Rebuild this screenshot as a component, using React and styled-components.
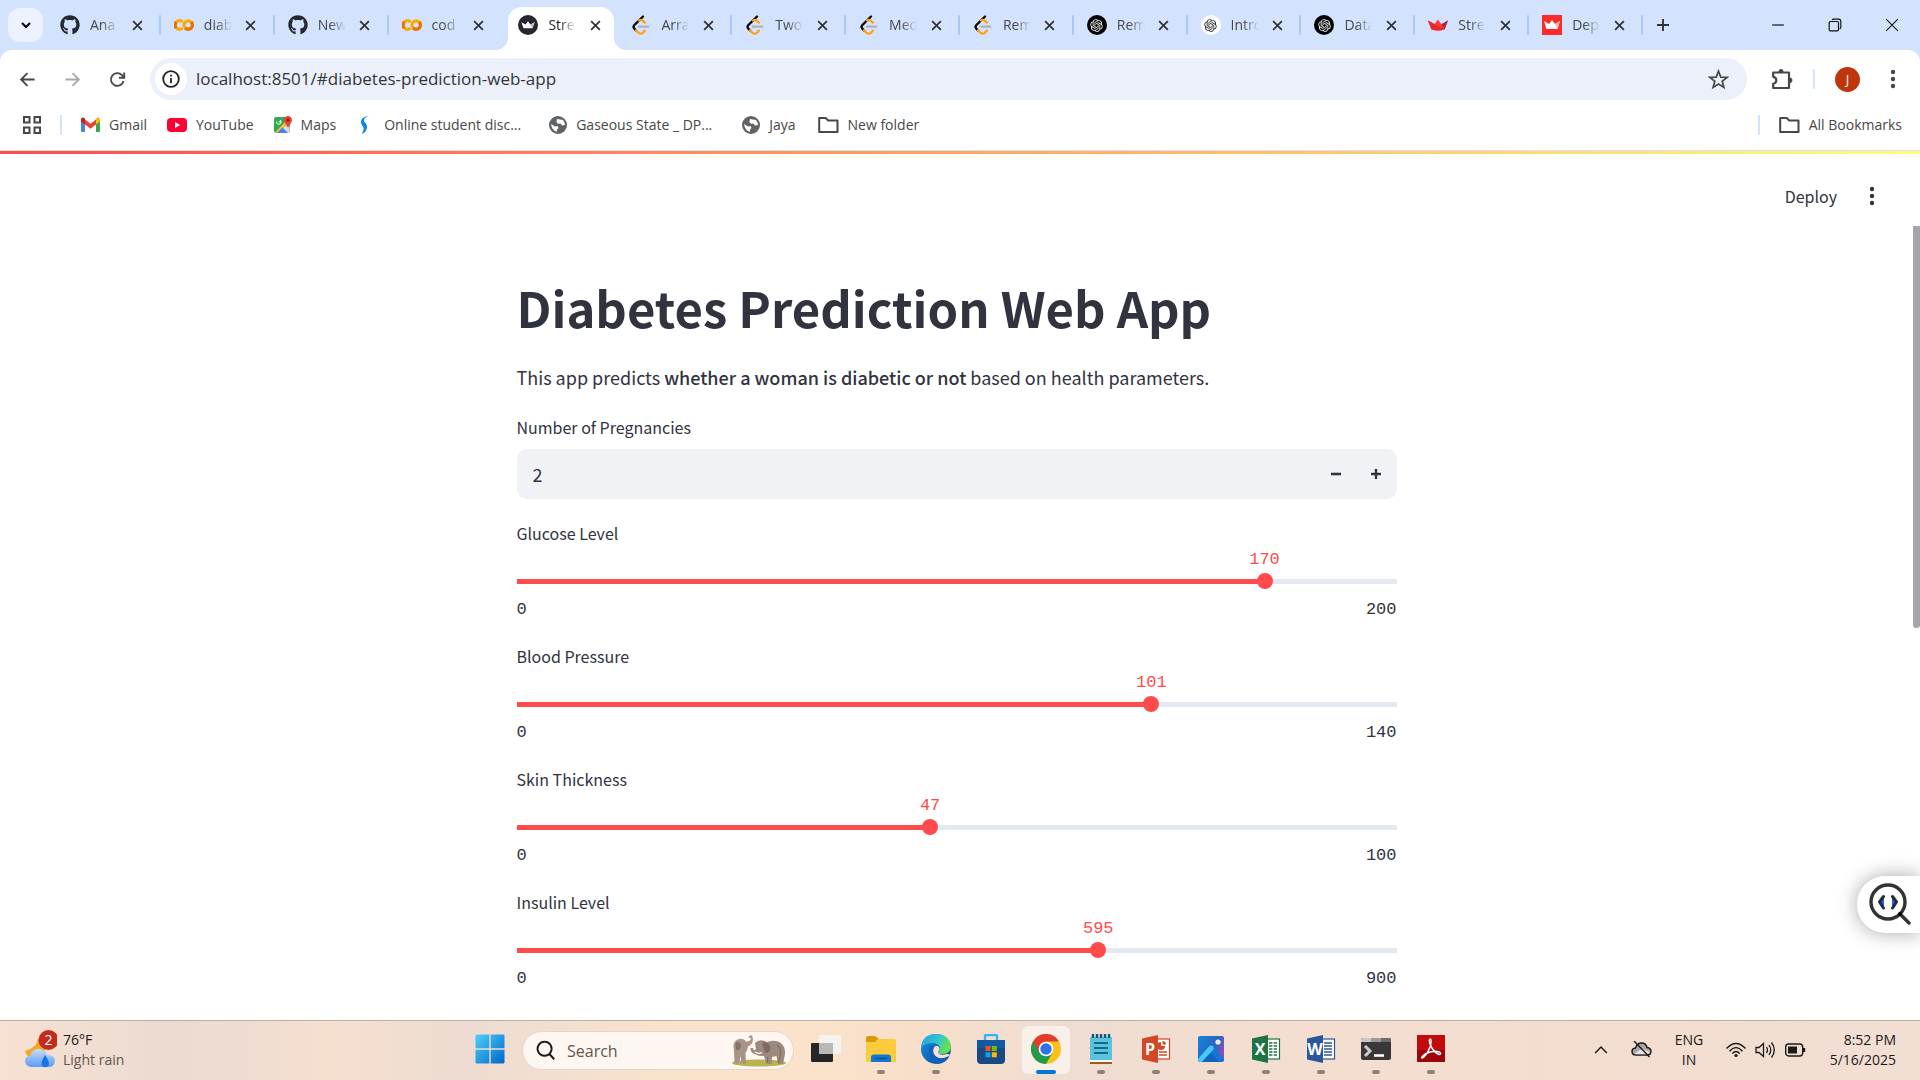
import React, { useState } from "react";
import styled, { createGlobalStyle } from "styled-components";
import { FaGithub } from "react-icons/fa";
import { RiOpenaiFill } from "react-icons/ri";

const ui = `"Open Sans", "Noto Sans", sans-serif`;
const sans = `"Noto Sans CJK SC", "Open Sans", sans-serif`;
const mono = `"Liberation Mono", monospace`;

const Global = createGlobalStyle`
  *, *::before, *::after { box-sizing: border-box; }
  body { margin: 0; background: #fff; font-family: ${ui}; }
  button, input { font: inherit; color: inherit; margin: 0; padding: 0; border: 0; background: none; outline: none; }
  button { cursor: pointer; }
  svg { display: block; flex: none; }
  a { color: inherit; text-decoration: none; }
`;

const Screen = styled.div`
  display: flex;
  flex-direction: column;
  height: 100vh;
  overflow: hidden;
`;

/* ---------- browser chrome ---------- */

const TabStrip = styled.div`
  display: flex;
  align-items: flex-end;
  height: 50px;
  padding-left: 8px;
  background: #d3e3fd;
`;

const TabSearch = styled.button`
  display: grid;
  place-items: center;
  width: 35px;
  height: 34px;
  margin: 0 4px 8px 0;
  border-radius: 12px;
  background: #ecf2fe;
`;

const Tabs = styled.div`
  display: flex;
  flex: 0 1 1596px;
  min-width: 0;
`;

const TabItem = styled.div`
  position: relative;
  display: flex;
  align-items: center;
  flex: ${(p) => (p.$active ? "0 0 106px" : "1 1 0")};
  min-width: 0;
  height: 43px;
  padding: 0 0 7px ${(p) => (p.$active ? "10px" : "13px")};
  margin: ${(p) => (p.$active ? "0 4px 0 6px" : "0")};
  background: ${(p) => (p.$active ? "#fff" : "transparent")};
  border-radius: 14px 14px 0 0;

  &::before, &::after {
    content: "";
    display: ${(p) => (p.$active ? "block" : "none")};
    position: absolute;
    bottom: 0;
    width: 12px;
    height: 12px;
  }
  &::before { left: -12px; background: radial-gradient(circle at 0 0, transparent 12px, #fff 12px); }
  &::after { right: -12px; background: radial-gradient(circle at 100% 0, transparent 12px, #fff 12px); }
`;

const TabTitle = styled.span`
  flex: none;
  width: 32px;
  margin: 0 7px 0 10px;
  white-space: nowrap;
  font-size: 14px;
  line-height: 20px;
  color: ${(p) => (p.$active ? "#1f1f1f" : "#474747")};
  mask-image: linear-gradient(90deg, #000 12px, transparent 28px);
`;

const TabClose = styled.button`
  display: grid;
  place-items: center;
  flex: none;
  width: 16px;
  height: 16px;
  color: #303134;
`;

const TabDivider = styled.span`
  flex: none;
  margin-left: auto;
  width: 2px;
  height: 20px;
  border-radius: 1px;
  background: ${(p) => (p.$hidden ? "transparent" : "#a8c7fa")};
`;

const NewTab = styled.button`
  display: grid;
  place-items: center;
  width: 34px;
  height: 34px;
  margin: 0 0 8px 3px;
  color: #303134;
`;

const WindowControls = styled.div`
  display: flex;
  align-self: stretch;
  margin-left: auto;
  button { display: grid; place-items: center; width: 57px; color: #111; }
`;

const Frame = styled.div`
  background: #d3e3fd;
`;

const Toolbar = styled.div`
  display: flex;
  align-items: center;
  height: 58px;
  padding: 0 7px 0 5px;
  background: #fff;
  border-radius: 12px 12px 0 0;
  color: #474747;
`;

const IconButton = styled.button`
  display: grid;
  place-items: center;
  width: 45px;
  height: 40px;
  color: ${(p) => (p.$dim ? "#aaa" : "#474747")};
`;

const AddressBar = styled.div`
  display: flex;
  align-items: center;
  flex: 1;
  height: 42px;
  margin: 0 12px 0 10px;
  padding: 0 18px 0 5px;
  border-radius: 21px;
  background: #ecf0fa;
`;

const SiteInfo = styled.button`
  display: grid;
  place-items: center;
  width: 32px;
  height: 32px;
  border-radius: 50%;
  background: #fff;
`;

const Url = styled.input`
  flex: 1;
  min-width: 0;
  margin-left: 9px;
  font-size: 17px;
  line-height: 24px;
  color: #333538;
`;

const Rule = styled.span`
  width: 2px;
  height: 20px;
  margin-left: ${(p) => p.$space || 0}px;
  border-radius: 1px;
  background: #d3e3fd;
`;

const Avatar = styled.button`
  width: 25px;
  height: 25px;
  margin: 0 10px 0 20px;
  border-radius: 50%;
  background: #bf360c;
  color: #fff;
  font-size: 13px;
  line-height: 25px;
`;

const Kebab = styled.button`
  display: grid;
  place-items: center;
  width: 45px;
  height: 40px;
  margin-right: ${(p) => (p.$app ? "0" : "-2px")};
`;

const Bookmarks = styled.nav`
  display: flex;
  align-items: center;
  height: 43px;
  padding: 0 18px 9px 23px;
  background: #fff;
  font-size: 14px;
  line-height: 20px;
  color: #474747;
  border-bottom: 1px solid #dcdfe3;
`;

const Bookmark = styled.a`
  display: flex;
  align-items: center;
  gap: 9px;
  margin-left: ${(p) => p.$space}px;
  white-space: nowrap;
`;

const BookmarkLabel = styled.span`
  min-width: ${(p) => p.$width || 0}px;
`;

const Push = styled.div`
  display: flex;
  align-items: center;
  margin-left: auto;
`;

/* ---------- Streamlit app ---------- */

const AppView = styled.div`
  position: relative;
  flex: 1;
  min-height: 0;
  display: flex;
  flex-direction: column;
  background: #fff;
  color: #31333f;
  font-family: ${sans};
`;

const AppHeader = styled.header`
  display: flex;
  align-items: center;
  justify-content: flex-end;
  flex: none;
  height: 75px;
  padding: 11px 26px 0 0;
  border-top: 3px solid;
  border-image: linear-gradient(90deg, #ff4b4b, #fffd80) 1;
`;

const Deploy = styled.button`
  margin-right: 12px;
  font-size: 16px;
  line-height: 24px;
`;

const Scroller = styled.div`
  display: flex;
  flex: 1;
  min-height: 0;
  overflow: hidden;
`;

const ScrollThumb = styled.div`
  width: 7px;
  height: 402px;
  background: #a5a5ab;
  border-radius: 0 0 3px 3px;
`;

const Main = styled.main`
  flex: 1;
  padding: 47px 20px 0;
`;

const Column = styled.div`
  display: flex;
  flex-direction: column;
  gap: 20px;
  max-width: 880px;
  margin: 0 auto;
`;

const Title = styled.h1`
  margin: 0;
  font-size: 49px;
  line-height: 68px;
  font-weight: 700;
`;

const Intro = styled.p`
  margin: 0;
  font-size: 18px;
  line-height: 32px;
  strong { font-weight: 500; }
`;

const Field = styled.div`
  display: flex;
  flex-direction: column;
`;

const Label = styled.label`
  font-size: 16px;
  line-height: 28px;
`;

const NumberBox = styled.div`
  display: flex;
  height: 50px;
  margin-top: 8px;
  padding-right: 1px;
  border-radius: 10px;
  background: #f0f2f6;
  overflow: hidden;
  input { flex: 1; min-width: 0; padding-left: 16px; font-size: 18px; line-height: 28px; }
  button { display: grid; place-items: center; width: 40px; }
`;

const NumberEnd = styled.div`
  display: flex;
`;

const ValueRow = styled.div`
  position: relative;
  height: 26px;
  font-family: ${mono};
  font-size: 17px;
  line-height: 26px;
  color: #ff4b4b;
  output { position: absolute; top: 0; transform: translateX(-50%); }
`;

const Track = styled.div`
  display: flex;
  height: 16px;
  background: linear-gradient(#e4e8f0, #e4e8f0) center / 100% 5px no-repeat;
`;

const Range = styled.input`
  appearance: none;
  flex: 1;
  height: 16px;
  margin: 0 -8px;
  cursor: pointer;
  &::-webkit-slider-thumb {
    appearance: none;
    width: 16px;
    height: 16px;
    border-radius: 50%;
    background: #ff4b4b;
  }
`;

const Limits = styled.div`
  display: flex;
  justify-content: space-between;
  margin-top: 9px;
  font-family: ${mono};
  font-size: 17px;
  line-height: 24px;
`;

const Inspector = styled.button`
  position: absolute;
  right: 0;
  bottom: 87px;
  display: flex;
  align-items: center;
  width: 63px;
  height: 57px;
  padding-left: 10px;
  border-radius: 28px 0 0 28px;
  background: #fff;
  box-shadow: 0 0 20px rgba(0, 0, 0, 0.35);
`;

/* ---------- Windows taskbar ---------- */

const Taskbar = styled.footer`
  display: grid;
  grid-template-columns: 1fr auto 1fr;
  flex: none;
  height: 60px;
  border-top: 1px solid #bcaea4;
  background: linear-gradient(90deg, #f7e1d2 0%, #eddbd2 8%, #eedbd2 12%, #f6dfcf 17%, #eedcd2 24%, #f2dfd0 29%, #fae3cb 35%, #fbe2ca 42%, #f8dfca 48%, #efdcd2 56%, #f4ded0 68%, #f3ddcf 80%, #f2ded3 100%);
  color: #1b1a19;
`;

const Weather = styled.button`
  display: flex;
  align-items: center;
  justify-self: start;
  gap: 6px;
  padding: 0 0 2px 22px;
  text-align: left;
  font-size: 14px;
  line-height: 20px;
  div { color: #5e5650; }
  b { display: block; font-weight: 400; color: #1b1a19; }
`;

const Dock = styled.div`
  display: flex;
  align-items: center;
`;

const DockItem = styled.button`
  display: flex;
  flex-direction: column;
  align-items: center;
  width: 55px;
  height: 59px;
  padding-top: 5px;
`;

const DockPlate = styled.span`
  display: flex;
  flex-direction: column;
  align-items: center;
  width: 48px;
  height: 48px;
  padding-top: 8px;
  border-radius: 6px;
  background: ${(p) => (p.$active ? "#faf0ea" : "transparent")};
  box-shadow: ${(p) => (p.$active ? "0 0 0 1px #ecddd3" : "none")};
`;

const Indicator = styled.span`
  flex: none;
  width: ${(p) => (p.$active ? 20 : 8)}px;
  height: 4px;
  margin-top: 6px;
  border-radius: 2px;
  background: ${(p) => (p.$active ? "#0078d4" : p.$open ? "#8d817b" : "transparent")};
`;

const SearchBox = styled.label`
  display: flex;
  align-items: center;
  width: 272px;
  height: 39px;
  margin: 0 4px 0 5px;
  padding: 0 6px 0 12px;
  border-radius: 20px;
  border: 1px solid #e6d5c8;
  background: #fef6f0;
  input { flex: 1; min-width: 0; margin-left: 11px; font-size: 16px; line-height: 22px; }
  input::placeholder { color: #5f5751; opacity: 1; }
`;

const Tray = styled.div`
  display: flex;
  align-items: center;
  justify-self: end;
  padding: 0 24px 2px 0;
  font-size: 14px;
  line-height: 20px;
`;

const Language = styled.button`
  width: 40px;
  margin: 0 17px;
  text-align: center;
`;

const Status = styled.button`
  display: flex;
  align-items: center;
  gap: 9px;
  margin-right: 20px;
`;

const Clock = styled.button`
  min-width: 70px;
  text-align: right;
`;

const TrayButton = styled.button`
  margin-right: ${(p) => p.$gap || 0}px;
`;

/* ---------- drawings ---------- */

const Stroke = ({ d, s = 20, w = 2, box = 24 }) => (
  <svg width={s} height={s} viewBox={`0 0 ${box} ${box}`} fill="none" stroke="currentColor" strokeWidth={w}>
    <path d={d} />
  </svg>
);

const Dots = ({ color = "#474747" }) => (
  <svg width="6" height="20" viewBox="0 0 6 20" fill={color}>
    <circle cx="3" cy="3" r="2.2" /><circle cx="3" cy="10" r="2.2" /><circle cx="3" cy="17" r="2.2" />
  </svg>
);

const Colab = () => (
  <svg width="20" height="20" viewBox="0 0 20 20" fill="none" strokeWidth="3.2">
    <path d="M8.6 7A4.3 4.3 0 1 0 8.6 13" stroke="#f9ab00" />
    <path d="M2.3 13A4.3 4.3 0 0 1 2.3 7" stroke="#e8710a" />
    <circle cx="14.2" cy="10" r="4.2" stroke="#f9ab00" />
    <path d="M17.2 7A4.2 4.2 0 0 1 11.2 13" stroke="#e8710a" />
  </svg>
);

const Crown = ({ color, dark, light, size = 20 }) => (
  <svg width={size} height={size} viewBox="0 0 20 20">
    <path d="M0 5.5 L6.5 9.2 L10 4.5 L13.5 9.2 L20 5.5 L16.5 14.5 Q10 16.5 3.5 14.5Z" fill={color} />
    <path d="M13.5 9.2 L20 5.5 L16.5 14.5Z" fill={dark} />
    <path d="M0 5.5 L16.5 14.5 Q10 16.5 3.5 14.5Z" fill={light} />
  </svg>
);

const StreamlitDark = () => (
  <svg width="20" height="20" viewBox="0 0 21 21">
    <circle cx="10.5" cy="10.5" r="10.5" fill="#262730" />
    <path d="M3.5 7.5 L8 10 L10.5 6.5 L13 10 L17.5 7.5 L15.2 14 H5.8Z" fill="#fff" />
    <path d="M13 10 L17.5 7.5 L15.2 14Z" fill="#bbb" />
  </svg>
);

const StreamlitTile = () => (
  <svg width="20" height="20" viewBox="0 0 20 20">
    <rect width="20" height="20" fill="#ff2b2b" />
    <path d="M2 6 L7 9 L10 5 L13 9 L18 6 L15.5 14 H4.5Z" fill="#fff" />
    <path d="M13 9 L18 6 L15.5 14Z" fill="#ffb8b8" />
  </svg>
);

const LeetCode = () => (
  <svg width="20" height="20" viewBox="0 0 20 20" fill="none" strokeLinecap="round" strokeWidth="2.3">
    <path d="M12 1.5 L3.2 10.2 Q1.8 11.8 3.2 13.4 L5 15.4" stroke="#070706" />
    <path d="M8 5.6 Q9.8 4 11.8 5.7 L13.8 7.6 M5 15.4 L7.6 17.9 Q9.8 19.4 11.8 17.8 L13.8 15.7" stroke="#ffa116" />
    <path d="M8 11.7 H17.2" stroke="#b3b3b3" />
  </svg>
);

const Badge = styled.span`
  display: grid;
  place-items: center;
  flex: none;
  width: 20px;
  height: 20px;
  border-radius: 50%;
  background: ${(p) => (p.$dark ? "#000" : "#fff")};
  color: ${(p) => (p.$dark ? "#fff" : "#222")};
`;

const OpenAI = ({ dark }) => <Badge $dark={dark}><RiOpenaiFill size={15} /></Badge>;

const Globe = () => (
  <svg width="18" height="18" viewBox="0 0 18 18">
    <circle cx="9" cy="9" r="9" fill="#5f6368" />
    <path d="M2 8 L6 10.5 L8.5 10 L9.5 12 L8 13.5 L8 15.8 Q3 15 2 8Z M8 3 L14 4 Q16 6.5 15.9 9 L13 9.5 L11.5 7.5 L9 7.8 L7.4 6Z" fill="#fff" />
  </svg>
);

const Folder = () => (
  <svg width="21" height="18" viewBox="0 0 21 18" fill="none" stroke="#474747" strokeWidth="2" strokeLinejoin="round">
    <path d="M1.2 2 H7.7 L10.2 4.5 H19.5 V16 H1.2Z" />
  </svg>
);

const Gmail = () => (
  <svg width="19" height="15" viewBox="0 0 19 15">
    <path d="M0 2 V13.5 Q0 15 1.5 15 H4 V5Z" fill="#4285f4" />
    <path d="M19 2 V13.5 Q19 15 17.5 15 H15 V5Z" fill="#34a853" />
    <path d="M4 2.5 L9.5 6.7 L15 2.5 V7.5 L9.5 11.8 L4 7.5Z" fill="#ea4335" />
    <path d="M0 2.2 Q.8-1 4 1.5 V7.5 L0 4.5Z" fill="#c5221f" />
    <path d="M19 2.2 Q18.2-1 15 1.5 V7.5 L19 4.5Z" fill="#fbbc04" />
  </svg>
);

const YouTube = () => (
  <svg width="20" height="14" viewBox="0 0 20 14">
    <rect width="20" height="14" rx="4" fill="#f03" /><path d="M8 4 L13.3 7 L8 10Z" fill="#fff" />
  </svg>
);

const Maps = () => (
  <svg width="18" height="18" viewBox="0 0 18 18">
    <rect y="1" width="16" height="16" rx="2" fill="#34a853" />
    <path d="M4 17 L15 6 L16 17Z" fill="#d7dbe0" />
    <path d="M1 16.5 L12 5 L14 7 L4 17Z" fill="#fbc02d" />
    <path d="M3 17 L8.5 11.5 L14 17Z" fill="#4285f4" />
    <path d="M2.5 5.6 A2.3 2.3 0 1 0 6 4 M4.6 5.8 H7" stroke="#fff" fill="none" />
    <path d="M14 0 A4 4 0 0 1 18 4.2 Q17.5 7 14 11.5 Q10.5 7 10 4.2 A4 4 0 0 1 14 0Z" fill="#ea4335" />
    <circle cx="14" cy="4" r="1.5" fill="#811411" />
  </svg>
);

const SMark = () => (
  <svg width="20" height="18" viewBox="0 0 20 18">
    <path d="M14 0 Q8 1.5 9 5.5 Q13 9 11.8 12.5 Q11 16.5 6.5 18 Q9.5 14 8.3 11 Q4.5 6.5 7 2.8 Q9.5.2 14 0Z" fill="#0a84e8" />
  </svg>
);

const Puzzle = () => (
  <svg width="22" height="22" viewBox="0 0 22 22" fill="none" stroke="#474747" strokeWidth="2.2" strokeLinejoin="round">
    <path d="M2.2 4.5 H18 V20 H2.2 V15.8 Q5.3 15.3 5.3 12.3 Q5.3 9.3 2.2 8.8Z" />
    <path d="M7.4 4.5 Q7.4 1 10 1 Q12.6 1 12.6 4.5Z M18 9.4 Q21.4 9.4 21.4 12.2 Q21.4 15 18 15Z" fill="#474747" stroke="none" />
  </svg>
);

const InspectIcon = () => (
  <svg width="44" height="44" viewBox="0 0 44 44" fill="none" strokeLinecap="round" strokeLinejoin="round">
    <path d="M16 14 L12 19 L16 24Z M25 14 L29 19 L25 24Z" fill="#1a66ff" />
    <circle cx="21" cy="19" r="17" stroke="#333" strokeWidth="3.4" />
    <path d="M33.5 31.5 L42 40" stroke="#333" strokeWidth="3.4" />
    <path d="M17 13.5 L13 19 L17 24.5 Z M25 13.5 L29 19 L25 24.5Z" fill="#1a66ff" />
    <path d="M16.5 13.5 L12.5 19 L16.5 25 M25.5 13.5 L29.5 19 L25.5 25" stroke="#252a33" strokeWidth="3" />
    <circle cx="33" cy="31" r="2" fill="#000" />
  </svg>
);

const WeatherIcon = () => (
  <svg width="35" height="42" viewBox="0 0 35 42">
    <defs>
      <linearGradient id="cloud" x1="0" y1="0" x2="0" y2="1"><stop stopColor="#c8dcfb" /><stop offset="1" stopColor="#5c9bf2" /></linearGradient>
    </defs>
    <path d="M16 9 Q15 19 3 22 Q6 31 15 30 Q25 27 23 17Z" fill="#f5a623" />
    <path d="M9 38 Q3 37 3 31 Q4 27 8 27 Q10 19 18 20 Q24 21 25 26 Q33 26 33 32 Q32 38 27 38Z" fill="url(#cloud)" />
    <path d="M23 26 Q28 33 26.5 36.5 Q23 40 20 36.5 Q18.5 33 23 26Z" fill="#1473e6" />
    <circle cx="26.5" cy="11" r="10" fill="#c42b1c" />
    <text x="26.5" y="16" textAnchor="middle" fontSize="14" fill="#fff" fontFamily="Open Sans, sans-serif">2</text>
  </svg>
);

const Elephants = () => (
  <svg width="56" height="32" viewBox="0 0 56 32">
    <ellipse cx="28" cy="28" rx="27" ry="3.6" fill="#b8b34c" />
    <path d="M3 15 Q1 6 8 4 Q13 3 15 6.5 Q20 7 20 2.5 L17.5 3 Q18-.5 21 .5 Q24 8 17 11.5 Q16.5 15 14.5 18 L15 28.5 H10.5 L9.5 21 L8 28.5 H3.5Z" fill="#a89387" />
    <path d="M4.5 8 Q9 5 10 11 Q9 16.5 5 15Z" fill="#86726a" />
    <path d="M24 8 Q29 3 36 7 Q48 3 53 12 Q55 17 53 24 L52 29 H47 L45.5 21 L41 22 L40.5 29 H35.5 L33 21 Q28 21.5 25 19.5 Q19 18 19.5 13 L22 13 Q22.5 17 25 14Z" fill="#9d897e" />
    <path d="M31 8 Q38.5 6 39.5 13 Q38 20 33.5 17Z" fill="#7e6a62" />
    <path d="M46 10 Q51 14 49 22 L47 28 M36.5 22 V28" stroke="#836f66" strokeWidth="1.2" fill="none" />
    <path d="M24 17 Q28 19.5 31 17.5" stroke="#fff" strokeWidth="1.2" fill="none" />
  </svg>
);

const Windows = () => (
  <svg width="30" height="30" viewBox="0 0 30 30">
    <defs><linearGradient id="win" x1="0" y1="0" x2="1" y2="1"><stop stopColor="#4ed0fd" /><stop offset="1" stopColor="#0067c8" /></linearGradient></defs>
    <path d="M1.5.5 H14.3 V14.3 H.5 V1.5Z M15.7.5 H28.5 L29.5 1.5 V14.3 H15.7Z M.5 15.7 H14.3 V29.5 H1.5 L.5 28.5Z M15.7 15.7 H29.5 V28.5 L28.5 29.5 H15.7Z" fill="url(#win)" />
  </svg>
);

const Svg30 = ({ children }) => <svg width="30" height="30" viewBox="0 0 30 30">{children}</svg>;

const TaskView = () => (
  <Svg30>
    <rect x="0" y="9" width="22" height="19" rx="1" fill="#262626" />
    <rect x="8" y="1" width="22" height="19" rx="1" fill="#f4f3f2" />
    <path d="M8 9 H22 V20 H8Z" fill="#bab7b5" />
  </Svg30>
);
const Explorer = () => (
  <Svg30>
    <path d="M0 4 Q0 2 2 2 H9 L13 5 V12 H0Z" fill="#d99a06" />
    <path d="M0 8 H9 L12 5 H28 Q30 5 30 7 V28 H0Z" fill="#fbcb3c" />
    <path d="M5 28 V23 Q5 20.5 8 20.5 H22 Q25 20.5 25 23 V28Z" fill="#0f78d4" />
    <path d="M9 24.5 H21" stroke="#0a4f92" strokeWidth="1.5" />
  </Svg30>
);
const Edge = () => (
  <Svg30>
    <defs>
      <linearGradient id="edgeTop" x1="0" y1="0" x2="1" y2=".4"><stop stopColor="#1ea1e6" /><stop offset=".6" stopColor="#33c6c9" /><stop offset="1" stopColor="#68e04f" /></linearGradient>
      <linearGradient id="edgeLow" x1="0" y1="0" x2="1" y2="1"><stop stopColor="#1b8fe0" /><stop offset="1" stopColor="#0b4a9c" /></linearGradient>
    </defs>
    <circle cx="15" cy="15" r="15" fill="url(#edgeLow)" />
    <path d="M0 14 Q1 0 15 0 Q28 0 30 12 Q30 20 21 20 Q17 20 17 18 Q19 17 19 14 Q18 9 11 9 Q4 9 0 14Z" fill="url(#edgeTop)" />
    <path d="M14 12 Q10 16 13 21 Q18 27 28 22 Q30 20 26 20 Q18 22 17 18 Q20 15 17 12Z" fill="#f7e0cf" />
    <path d="M9 12 Q5 24 16 30 Q24 30 28 23 Q19 27 13.5 21 Q10.5 16 14 12Z" fill="#1063bd" />
  </Svg30>
);
const Store = () => (
  <Svg30>
    <path d="M9 6 V2 Q9 1 10 1 H20 Q21 1 21 2 V6" stroke="#2fb7f2" strokeWidth="2.4" fill="none" />
    <path d="M1 6 H29 V26 Q29 30 25 30 H5 Q1 30 1 26Z" fill="#174a85" />
    <path d="M1 6 H29 V14 H1Z" fill="#105ca9" opacity=".8" />
    <path d="M9.5 12 H14.5 V17 H9.5Z" fill="#f25022" /><path d="M15.8 12 H20.8 V17 H15.8Z" fill="#7fba00" />
    <path d="M9.5 18.3 H14.5 V23.3 H9.5Z" fill="#00a4ef" /><path d="M15.8 18.3 H20.8 V23.3 H15.8Z" fill="#ffb900" />
  </Svg30>
);
const Chrome = () => (
  <Svg30>
    <circle cx="15" cy="15" r="15" fill="#fbc116" />
    <path d="M15 15 L2 7.5 A15 15 0 0 0 15 30 L21.5 18.7Z" fill="#229c4c" />
    <path d="M2 7.5 A15 15 0 0 1 28 7.5 H15 L8.5 18.7Z" fill="#e33b2e" />
    <circle cx="15" cy="15" r="7.3" fill="#fff" /><circle cx="15" cy="15" r="5.7" fill="#2f73ea" />
  </Svg30>
);
const Notepad = () => (
  <Svg30>
    <rect x="4" y="3" width="22" height="24" rx="1" fill="#5cc1dd" />
    <path d="M7 0 V4 M11 0 V4 M15 0 V4 M19 0 V4 M23 0 V4" stroke="#0c5a78" strokeWidth="2.4" />
    <path d="M8 9 H22 M8 14 H22 M8 19 H22" stroke="#0b6c8d" strokeWidth="1.8" />
    <path d="M4 26 H26 V28 H4Z" fill="#fff" /><path d="M4 28 H26 V30 H4Z" fill="#a4571c" />
  </Svg30>
);
const Office = ({ letter, color }) => (
  <Svg30>
    <rect x="13" y="5" width="15.5" height="20" fill="#fff" stroke={color} strokeWidth="1.2" />
    <path d="M18 9 H26 M18 12 H26 M18 15 H26 M18 18 H26 M18 21 H26" stroke={color} strokeWidth="1.6" />
    {letter === "X" && <path d="M22 7 V23" stroke="#fff" strokeWidth="1.2" />}
    {letter === "P" && <path d="M17 8 H26 V16.5 H17Z" fill="#fff" />}
    {letter === "P" && <path d="M20 8 A4 4 0 1 0 24 12 H20Z M21.5 7 V10.5 H25 A3.5 3.5 0 0 0 21.5 7Z" fill={color} />}
    <path d="M1 4.5 L17 1 V29 L1 25.5Z" fill={color} />
    <text x="9" y="21" textAnchor="middle" fontSize="16" fontWeight="700" fill="#fff" fontFamily="Open Sans, sans-serif">{letter}</text>
  </Svg30>
);
const Photos = () => (
  <Svg30>
    <defs><linearGradient id="photo" x1="0" y1="0" x2="1" y2=".6"><stop stopColor="#1186df" /><stop offset=".6" stopColor="#2a65bd" /><stop offset="1" stopColor="#8f4eb4" /></linearGradient></defs>
    <rect x="2" y="2" width="26" height="26" rx="2" fill="url(#photo)" />
    <path d="M12 13 Q15 9 18 13 L28 25 Q28 28 25 28 H18 L8 19Z" fill="#1576d4" />
    <path d="M2 25 L13 12.5 Q15 10.5 17 12.5 Q18.5 14 17 16 L6 28 H4 Q2 28 2 25Z" fill="#46c8fa" />
    <path d="M6 28 L13.5 20 Q15 19 16.5 20 L23 28Z" fill="#1064c0" />
    <circle cx="22" cy="8" r="2.6" fill="#e8eefc" />
  </Svg30>
);
const Terminal = () => (
  <Svg30>
    <rect y="4" width="30" height="22" rx="2" fill="#383838" />
    <path d="M0 8 V6 Q0 4 2 4 H10 V8Z" fill="#c9c9c9" /><path d="M10 4 H20 V8 H10Z" fill="#9b9b9b" /><path d="M20 4 H28 Q30 4 30 6 V8 H20Z" fill="#6d6d6d" />
    <path d="M4 12 L9 17 L4 22" stroke="#ccc" strokeWidth="3" fill="none" /><path d="M13 21.5 H23" stroke="#fff" strokeWidth="2.6" />
  </Svg30>
);
const Acrobat = () => (
  <Svg30>
    <rect x="1" y="1" width="28" height="27" fill="#c30b0e" /><path d="M1 16 H29 V28 H1Z" fill="#7c0407" opacity=".55" />
    <path d="M6 24 Q10 23 14 13 Q16 6 14.5 5 Q12.5 5 14 10 Q17 18 23 20.5 Q26 20 23.5 18 Q17 16 9 20 Q5 23 6 24Z" fill="none" stroke="#fff" strokeWidth="1.5" />
  </Svg30>
);

const CloudOff = () => (
  <svg width="21" height="17" viewBox="0 0 21 17" fill="none" stroke="#1b1a19" strokeWidth="1.4">
    <path d="M5 14 Q1 14 1 10.5 Q1 7.5 4.5 7 Q6 2 10.5 2 Q15 2 16 6.5 Q20 7 20 10.5 Q20 14 16 14Z" fill="#aaa6a4" />
    <path d="M3 13 L11 7.5 L19 11 Q18 13.3 16 13.3 H5Z" fill="#e6e3e2" stroke="none" /><path d="M3 0 L18.5 16" />
  </svg>
);
const Wifi = () => (
  <svg width="20" height="16" viewBox="0 0 20 16" fill="none" stroke="#1b1a19" strokeWidth="1.4">
    <path d="M.5 6.5 Q10-3.5 19.5 6.5 M3.5 9.2 Q10 2 16.5 9.2 M6.3 11.6 Q10 7.5 13.7 11.6" /><circle cx="10" cy="13.5" r="1.6" fill="#1b1a19" stroke="none" />
  </svg>
);
const Speaker = () => (
  <svg width="21" height="18" viewBox="0 0 21 18" fill="none" stroke="#1b1a19" strokeWidth="1.3">
    <path d="M1 6.5 H4 L8.5 2.5 V15.5 L4 11.5 H1Z M11.5 6 Q13.5 9 11.5 12 M14 4 Q17.5 9 14 14 M16.5 1.5 Q22 9 16.5 16.5" />
  </svg>
);
const Battery = () => (
  <svg width="21" height="14" viewBox="0 0 21 14" fill="none" stroke="#1b1a19" strokeWidth="1.4">
    <rect x=".7" y="1" width="17" height="12" rx="3" /><rect x="3" y="3.5" width="9" height="7" fill="#1b1a19" stroke="none" /><path d="M19 5 V9" strokeWidth="2.4" />
  </svg>
);

/* ---------- data ---------- */

const tabs = [
  ["Ana", <FaGithub size={20} color="#24292f" />],
  ["diab", <Colab />],
  ["New", <FaGithub size={20} color="#24292f" />],
  ["cod", <Colab />],
  ["Stre", <StreamlitDark />],
  ["Arra", <LeetCode />],
  ["Two", <LeetCode />],
  ["Med", <LeetCode />],
  ["Rem", <LeetCode />],
  ["Rem", <OpenAI dark />],
  ["Intro", <OpenAI />],
  ["Data", <OpenAI dark />],
  ["Stre", <Crown color="#ff3a3a" dark="#9b3346" light="#e8262c" />],
  ["Dep", <StreamlitTile />],
];

const bookmarks = [
  ["Gmail", <Gmail />, 19],
  ["YouTube", <YouTube />, 20],
  ["Maps", <Maps />, 20],
  ["Online student disc...", <SMark />, 19, 139],
  ["Gaseous State _ DP...", <Globe />, 26, 138],
  ["Jaya", <Globe />, 28],
  ["New folder", <Folder />, 22],
];

const dock = [
  ["Task view", <TaskView />, false],
  ["File Explorer", <Explorer />, true],
  ["Edge", <Edge />, true],
  ["Store", <Store />, false],
  ["Chrome", <Chrome />, true, true],
  ["Notepad", <Notepad />, true],
  ["PowerPoint", <Office letter="P" color="#d24726" />, true],
  ["Photos", <Photos />, true],
  ["Excel", <Office letter="X" color="#1f7244" />, true],
  ["Word", <Office letter="W" color="#2b579a" />, true],
  ["Terminal", <Terminal />, true],
  ["Acrobat", <Acrobat />, true],
];

const sliders = [
  ["Glucose Level", 170, 200],
  ["Blood Pressure", 101, 140],
  ["Skin Thickness", 47, 100],
  ["Insulin Level", 595, 900],
];

function Slider({ label, initial, max }) {
  const [value, setValue] = useState(initial);
  const pct = (value / max) * 100;
  const id = label.toLowerCase().replace(/ /g, "-");
  return (
    <Field>
      <Label htmlFor={id}>{label}</Label>
      <ValueRow><output htmlFor={id} style={{ left: `${pct}%` }}>{value}</output></ValueRow>
      <Track style={{ backgroundImage: `linear-gradient(90deg, #ff4b4b ${pct}%, #e4e8f0 ${pct}%)` }}>
        <Range id={id} type="range" min="0" max={max} value={value} onChange={(e) => setValue(+e.target.value)} />
      </Track>
      <Limits><span>0</span><span>{max}</span></Limits>
    </Field>
  );
}

export default function App() {
  const [count, setCount] = useState(2);
  return (
    <Screen>
      <Global />
      <TabStrip>
        <TabSearch aria-label="Search tabs"><Stroke d="M6 9 L12 15 L18 9" s={16} w={3} /></TabSearch>
        <Tabs>
          {tabs.map(([title, icon], i) => (
            <TabItem key={i} $active={i === 4}>
              {icon}
              <TabTitle $active={i === 4}>{title}</TabTitle>
              <TabClose aria-label="Close tab"><Stroke d="M5 5 L19 19 M19 5 L5 19" s={15} w={2.8} /></TabClose>
              <TabDivider $hidden={i === 3 || i === 4} />
            </TabItem>
          ))}
        </Tabs>
        <NewTab aria-label="New tab"><Stroke d="M12 3 V21 M3 12 H21" s={16} w={2.8} /></NewTab>
        <WindowControls>
          <button aria-label="Minimize"><Stroke d="M2 12 H22" s={14} w={2} /></button>
          <button aria-label="Restore"><Stroke d="M2 8 Q2 6 4 6 H16 Q18 6 18 8 V20 Q18 22 16 22 H4 Q2 22 2 20Z M7 3 Q8 2 10 2 H18 Q22 2 22 6 V16 Q22 18 20 19" s={14} w={2} /></button>
          <button aria-label="Close"><Stroke d="M2 2 L22 22 M22 2 L2 22" s={14} w={1.8} /></button>
        </WindowControls>
      </TabStrip>

      <Frame>
        <Toolbar>
          <IconButton aria-label="Back"><Stroke d="M22 12 H3 M12 3 L3 12 L12 21" s={17} w={2.6} /></IconButton>
          <IconButton aria-label="Forward" $dim><Stroke d="M2 12 H21 M12 3 L21 12 L12 21" s={17} w={2.6} /></IconButton>
          <IconButton aria-label="Reload"><Stroke d="M20.5 14 A9 9 0 1 1 18 5.5 L21 9 M21.5 2 V9.5 H14" s={17} w={2.6} /></IconButton>
          <AddressBar>
            <SiteInfo aria-label="Site information">
              <svg width="18" height="18" viewBox="0 0 18 18" fill="none" stroke="#202124" strokeWidth="1.8">
                <circle cx="9" cy="9" r="7.8" /><path d="M9 8 V13.2 M9 4.8 V6.6" />
              </svg>
            </SiteInfo>
            <Url aria-label="Address" defaultValue="localhost:8501/#diabetes-prediction-web-app" />
            <Stroke d="M12 2.5 L14.6 9.3 L21.8 9.6 L16.2 14.1 L18.1 21 L12 17.1 L5.9 21 L7.8 14.1 L2.2 9.6 L9.4 9.3Z" s={21} w={2} />
          </AddressBar>
          <IconButton aria-label="Extensions"><Puzzle /></IconButton>
          <Rule $space={9} />
          <Avatar>J</Avatar>
          <Kebab aria-label="Menu"><Dots /></Kebab>
        </Toolbar>
      </Frame>

      <Bookmarks>
        <svg width="18" height="18" viewBox="0 0 18 18" fill="none" stroke="#474747" strokeWidth="2">
          <path d="M1 1 H6.5 V6.5 H1Z M11.5 1 H17 V6.5 H11.5Z M1 11.5 H6.5 V17 H1Z M11.5 11.5 H17 V17 H11.5Z" />
        </svg>
        <Rule $space={19} />
        {bookmarks.map(([name, icon, space, width]) => (
          <Bookmark key={name} href="#" $space={space}>{icon}<BookmarkLabel $width={width}>{name}</BookmarkLabel></Bookmark>
        ))}
        <Push>
          <Rule />
          <Bookmark href="#" $space={19}><Folder /><span>All Bookmarks</span></Bookmark>
        </Push>
      </Bookmarks>

      <AppView>
        <AppHeader>
          <Deploy>Deploy</Deploy>
          <Kebab $app aria-label="App menu"><Dots color="#31333f" /></Kebab>
        </AppHeader>
        <Scroller>
          <Main>
            <Column>
              <Title>Diabetes Prediction Web App</Title>
              <Intro>This app predicts <strong>whether a woman is diabetic or not</strong> based on health parameters.</Intro>
              <Field>
                <Label htmlFor="pregnancies">Number of Pregnancies</Label>
                <NumberBox>
                  <input id="pregnancies" inputMode="numeric" value={count} onChange={(e) => setCount(+e.target.value || 0)} />
                  <NumberEnd>
                    <button aria-label="Decrease" onClick={() => setCount(count - 1)}><Stroke d="M0 5 H10" s={10} w={2.4} box={10} /></button>
                    <button aria-label="Increase" onClick={() => setCount(count + 1)}><Stroke d="M0 5 H10 M5 0 V10" s={10} w={2.4} box={10} /></button>
                  </NumberEnd>
                </NumberBox>
              </Field>
              {sliders.map(([label, v, max]) => <Slider key={label} label={label} initial={v} max={max} />)}
            </Column>
          </Main>
          <ScrollThumb />
        </Scroller>
        <Inspector aria-label="Inspect"><InspectIcon /></Inspector>
      </AppView>

      <Taskbar>
        <Weather><WeatherIcon /><div><b>76°F</b>Light rain</div></Weather>
        <Dock>
          <DockItem aria-label="Start"><DockPlate><Windows /></DockPlate></DockItem>
          <SearchBox>
            <Stroke d="M11 2 A8 8 0 1 1 10.9 2 M16.5 16 L22 22" s={21} w={2.2} />
            <input aria-label="Search" placeholder="Search" />
            <Elephants />
          </SearchBox>
          {dock.map(([name, icon, open, active]) => (
            <DockItem key={name} aria-label={name}>
              <DockPlate $active={active}>{icon}<Indicator $open={open} $active={active} /></DockPlate>
            </DockItem>
          ))}
        </Dock>
        <Tray>
          <TrayButton aria-label="Show hidden icons" $gap={23}><Stroke d="M2 17 L12 7 L22 17" s={14} w={2.6} /></TrayButton>
          <TrayButton aria-label="OneDrive"><CloudOff /></TrayButton>
          <Language>ENG<br />IN</Language>
          <Status aria-label="Network, volume, battery"><Wifi /><Speaker /><Battery /></Status>
          <Clock>8:52 PM<br />5/16/2025</Clock>
        </Tray>
      </Taskbar>
    </Screen>
  );
}
